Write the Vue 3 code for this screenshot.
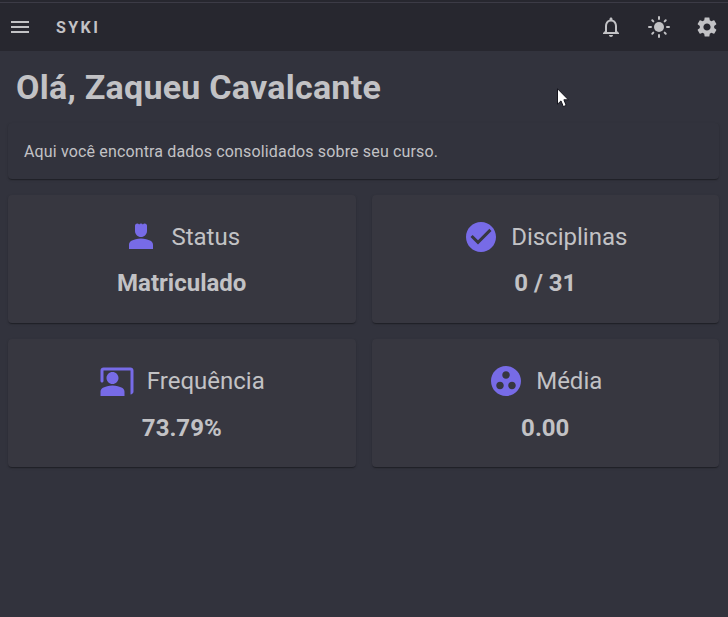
<script setup>
const cards = [
  { icon: 'person', label: 'Status', value: 'Matriculado' },
  { icon: 'check', label: 'Disciplinas', value: '0 / 31' },
  { icon: 'present', label: 'Frequência', value: '73.79%' },
  { icon: 'group', label: 'Média', value: '0.00' },
]
const paths = {
  person: 'M18.39,14.56C16.71,13.7,14.53,13,12,13s-4.71,0.7-6.39,1.56C4.61,15.07,4,16.1,4,17.22V20h16v-2.78C20,16.1,19.39,15.07,18.39,14.56z M12,12c2.21,0,4-1.79,4-4V4.5C16,3.67,15.33,3,14.5,3c-0.52,0-0.98,0.27-1.25,0.67C12.98,3.27,12.52,3,12,3s-0.98,0.27-1.25,0.67C10.48,3.27,10.02,3,9.5,3C8.67,3,8,3.67,8,4.5V8C8,10.21,9.79,12,12,12z',
  check: 'M12 2C6.48 2 2 6.48 2 12s4.48 10 10 10 10-4.48 10-10S17.52 2 12 2zm-2 15l-5-5 1.41-1.41L10 14.17l7.59-7.59L19 8l-9 9z',
  present: 'M21,3H3C1.89,3,1,3.89,1,5v7c0,.55.45,1,1,1s1-.45,1-1V5h18v14c0,.55,0,1.5,0,2c1.1,0,2-.9,2-2V5C23,3.89,22.1,3,21,3z M9,14c2.21,0,4-1.79,4-4s-1.79-4-4-4s-4,1.79-4,4S6.79,14,9,14z M15.39,16.56C13.71,15.7,11.53,15,9,15s-4.71,0.7-6.39,1.56C1.61,17.07,1,18.1,1,19.22V22h16v-2.78C17,18.1,16.39,17.07,15.39,16.56z',
  group: 'M12 2C6.48 2 2 6.48 2 12s4.48 10 10 10 10-4.48 10-10S17.52 2 12 2zM8 17.5c-1.38 0-2.5-1.12-2.5-2.5s1.12-2.5 2.5-2.5 2.5 1.12 2.5 2.5-1.12 2.5-2.5 2.5zM9.5 8c0-1.38 1.12-2.5 2.5-2.5s2.5 1.12 2.5 2.5-1.12 2.5-2.5 2.5S9.5 9.38 9.5 8zm6.5 9.5c-1.38 0-2.5-1.12-2.5-2.5s1.12-2.5 2.5-2.5 2.5 1.12 2.5 2.5-1.12 2.5-2.5 2.5z',
}
</script>

<template>
  <div class="page">
    <header class="appbar">
      <svg class="icon" viewBox="0 0 24 24"><path d="M3 18h18v-2H3v2zm0-5h18v-2H3v2zm0-7v2h18V6H3z" /></svg>
      <span class="brand">SYKI</span>
      <div class="actions">
        <svg class="icon" viewBox="0 0 24 24"><path d="M12 22c1.1 0 2-.9 2-2h-4c0 1.1.9 2 2 2zm6-6v-5c0-3.07-1.63-5.64-4.5-6.32V4c0-.83-.67-1.5-1.5-1.5s-1.5.67-1.5 1.5v.68C7.64 5.36 6 7.92 6 11v5l-2 2v1h16v-1l-2-2zm-2 1H8v-6c0-2.48 1.51-4.5 4-4.5s4 2.02 4 4.5v6z" /></svg>
        <svg class="icon" viewBox="0 0 24 24">
          <circle cx="12" cy="12" r="5" />
          <path class="rays" d="M2 12h2M20 12h2M12 2v2M12 20v2M5.28 5.28l1.06 1.06M17.66 17.66l1.06 1.06M18.72 5.28l-1.06 1.06M6.34 17.66l-1.06 1.06" />
        </svg>
        <svg class="icon" viewBox="0 0 24 24"><path d="M19.14,12.94c0.04-0.3,0.06-0.61,0.06-0.94c0-0.32-0.02-0.64-0.07-0.94l2.03-1.58c0.18-0.14,0.23-0.41,0.12-0.61l-1.92-3.32c-0.12-0.22-0.37-0.29-0.59-0.22l-2.39,0.96c-0.5-0.38-1.03-0.7-1.62-0.94L14.4,2.81c-0.04-0.24-0.24-0.41-0.48-0.41h-3.84c-0.24,0-0.43,0.17-0.47,0.41L9.25,5.35C8.66,5.59,8.12,5.92,7.63,6.29L5.24,5.33c-0.22-0.08-0.47,0-0.59,0.22L2.74,8.87C2.62,9.08,2.66,9.34,2.86,9.48l2.03,1.58C4.84,11.36,4.8,11.69,4.8,12s0.02,0.64,0.07,0.94l-2.03,1.58c-0.18,0.14-0.23,0.41-0.12,0.61l1.92,3.32c0.12,0.22,0.37,0.29,0.59,0.22l2.39-0.96c0.5,0.38,1.03,0.7,1.62,0.94l0.36,2.54c0.05,0.24,0.24,0.41,0.48,0.41h3.84c0.24,0,0.44-0.17,0.47-0.41l0.36-2.54c0.59-0.24,1.13-0.56,1.62-0.94l2.39,0.96c0.22,0.08,0.47,0,0.59-0.22l1.92-3.32c0.12-0.22,0.07-0.47-0.12-0.61L19.14,12.94z M12,15.6c-1.98,0-3.6-1.62-3.6-3.6s1.62-3.6,3.6-3.6s3.6,1.62,3.6,3.6S13.98,15.6,12,15.6z" /></svg>
      </div>
    </header>
    <main class="content">
      <h1 class="title">Olá, Zaqueu Cavalcante</h1>
      <p class="paper intro">Aqui você encontra dados consolidados sobre seu curso.</p>
      <section class="grid">
        <article v-for="card in cards" :key="card.label" class="paper card">
          <div class="heading">
            <svg class="card-icon" viewBox="0 0 24 24"><path :d="paths[card.icon]" /></svg>
            <span>{{ card.label }}</span>
          </div>
          <strong class="value">{{ card.value }}</strong>
        </article>
      </section>
    </main>
    <svg class="cursor" viewBox="0 0 12 20"><path d="M.5 .7V16.2L4 12.9L6.3 18.6L9.2 17.4L6.9 11.8H11.4Z" /></svg>
  </div>
</template>

<style>
body { margin: 0; background: #32333d; }
</style>

<style scoped>
.page {
  position: relative;
  box-sizing: border-box;
  height: 617px;
  padding-top: 2px;
  overflow: hidden;
  background: #32333d;
  box-shadow: inset 0 2px #27272f;
  color: #c2c2c5;
  font-family: Roboto, sans-serif;
}
.appbar {
  display: flex;
  align-items: center;
  box-sizing: border-box;
  height: 49px;
  padding: 0 9px 0 8px;
  border-top: 1px solid #3c3b46;
  background: #27272f;
}
.icon { display: block; width: 24px; height: 24px; fill: currentColor; }
.rays { stroke: currentColor; stroke-width: 2; stroke-linecap: round; }
.brand { margin-left: 24px; padding-top: 2px; font-size: 16px; font-weight: 700; line-height: 20px; letter-spacing: 2.4px; }
.actions { display: flex; gap: 24px; margin-left: auto; }
.content { padding: 16px 9px 0 8px; }
.title {
  margin: 0 8px 16px;
  font-size: 34px;
  font-weight: 700;
  line-height: 40px;
  letter-spacing: 0.25px;
}
.paper {
  border-radius: 4px;
  background: #373740;
  box-shadow: 0 2px 1px -1px rgba(0, 0, 0, 0.2), 0 1px 1px rgba(0, 0, 0, 0.14), 0 1px 3px rgba(0, 0, 0, 0.12);
}
.intro {
  margin: 0 0 16px;
  padding: 17px 16px 15px;
  background: #32333d;
  font-size: 16px;
  line-height: 24px;
  letter-spacing: 0.15px;
}
.grid { display: grid; grid-template-columns: 1fr 1fr; gap: 16px; }
.card {
  display: flex;
  flex-direction: column;
  align-items: center;
  gap: 12.4px;
  box-sizing: border-box;
  height: 128.2px;
  padding-top: 24px;
  font-size: 24px;
  line-height: 32px;
}
.heading { display: flex; align-items: center; gap: 12px; height: 36px; }
.card-icon { display: block; width: 36px; height: 36px; fill: #776be7; }
.value { font-weight: 700; }
.cursor {
  position: absolute;
  left: 557px;
  top: 88px;
  width: 12px;
  height: 20px;
  fill: #fff;
  stroke: #15151d;
  stroke-width: 1;
}
</style>
